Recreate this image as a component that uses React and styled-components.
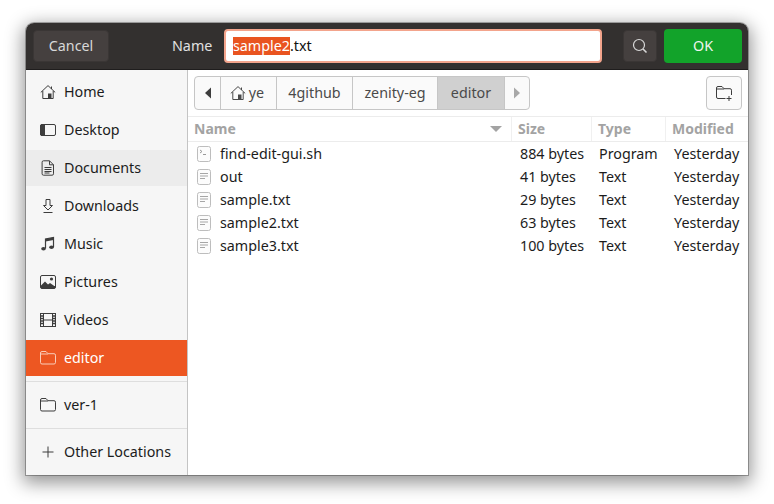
import React from "react";
import styled, { createGlobalStyle } from "styled-components";

const GlobalStyle = createGlobalStyle`
  html, body {
    margin: 0;
    padding: 0;
    background: #ffffff;
  }
  body {
    font-family: "Noto Sans", "Open Sans", sans-serif;
    font-size: 14.3px;
    line-height: 16px;
    color: #1c1c1c;
  }
`;

const Page = styled.div`
  width: 774px;
  height: 504px;
  box-sizing: border-box;
  padding: 23px 26px 29px;
  overflow: hidden;
`;

const Dialog = styled.div`
  height: 452px;
  display: flex;
  flex-direction: column;
  border-radius: 8px 8px 0 0;
  background: #ffffff;
  box-shadow: 0 0 0 1px rgba(0, 0, 0, 0.28), 0 5px 18px 3px rgba(0, 0, 0, 0.42);
`;

const HeaderBar = styled.header`
  height: 46px;
  flex: none;
  display: flex;
  align-items: center;
  padding: 0 6px 0 7px;
  background: #33302f;
  border-bottom: 1px solid #1f1d1d;
  border-radius: 8px 8px 0 0;
`;

const HeaderButton = styled.button`
  all: unset;
  box-sizing: border-box;
  display: flex;
  flex: none;
  align-items: center;
  justify-content: center;
  width: ${(p) => p.$width}px;
  height: 32px;
  margin-left: ${(p) => p.$left || 0}px;
  border-radius: 4px;
  background: #45403f;
  border: 1px solid #3a3635;
  color: #d8d8d8;
`;

const OkButton = styled.button`
  all: unset;
  box-sizing: border-box;
  display: flex;
  flex: none;
  align-items: center;
  justify-content: center;
  width: 78px;
  height: 34px;
  margin-left: 7px;
  border-radius: 4px;
  background: #12a32a;
  color: #f0f5f0;
`;

const NameLabel = styled.span`
  flex: none;
  width: 40px;
  margin-left: 63px;
  white-space: nowrap;
  color: #e0e0e0;
`;

const NameEntry = styled.div`
  flex: 1;
  box-sizing: border-box;
  height: 34px;
  margin-left: 12px;
  padding-left: 7px;
  display: flex;
  align-items: center;
  background: #ffffff;
  border: 2px solid #f3a48c;
  border-radius: 4px;
  color: #111111;
`;

const Selected = styled.span`
  padding: 1px 0;
  background: #e95420;
  color: #ffffff;
`;

const Body = styled.div`
  flex: 1;
  display: flex;
  min-height: 0;
`;

const Sidebar = styled.nav`
  box-sizing: border-box;
  width: 162px;
  flex: none;
  padding-top: 4px;
  display: flex;
  flex-direction: column;
  gap: 2px;
  background: #f6f6f6;
  border-right: 1px solid #c4c4c4;
`;

const SideRow = styled.div`
  height: 36px;
  flex: none;
  display: flex;
  align-items: center;
  gap: 8px;
  padding-left: 14px;
  color: ${(p) => (p.$active ? "#ffffff" : "#1c1c1c")};
  background: ${(p) => (p.$active ? "#ed5722" : p.$hover ? "#ececec" : "transparent")};
  svg {
    flex: none;
    color: ${(p) => (p.$active ? "#f9cdb9" : "#3d3d3d")};
  }
`;

const SideRule = styled.hr`
  flex: none;
  margin: 3px 0;
  border: 0;
  height: 1px;
  background: #dedede;
`;

const Main = styled.main`
  flex: 1;
  min-width: 0;
  display: flex;
  flex-direction: column;
`;

const PathRow = styled.div`
  height: 34px;
  flex: none;
  display: flex;
  justify-content: space-between;
  padding: 6px;
`;

const PathBar = styled.div`
  display: flex;
  height: 34px;
  box-sizing: border-box;
  border: 1px solid #c6c6c6;
  border-radius: 4px;
  background: #fafafa;
  overflow: hidden;
`;

const Crumb = styled.div`
  box-sizing: border-box;
  width: ${(p) => p.$width}px;
  display: flex;
  align-items: center;
  justify-content: center;
  gap: 3px;
  padding-right: ${(p) => p.$trim || 0}px;
  color: #4a4a4a;
  background: ${(p) => (p.$current ? "#d0d0d0" : "transparent")};
  border-left: ${(p) => (p.$first ? "0" : "1px solid #c6c6c6")};
`;

const NewFolderButton = styled.button`
  all: unset;
  box-sizing: border-box;
  width: 36px;
  height: 34px;
  display: flex;
  align-items: center;
  justify-content: center;
  border: 1px solid #c6c6c6;
  border-radius: 4px;
  background: #fafafa;
  color: #3d3d3d;
`;

const columns = "323px 80px 74px 1fr";

const TableHead = styled.div`
  box-sizing: border-box;
  height: 26px;
  flex: none;
  display: grid;
  grid-template-columns: ${columns};
  border-top: 1px solid #ececec;
  border-bottom: 1px solid #ececec;
`;

const HeadCell = styled.div`
  display: flex;
  align-items: center;
  justify-content: space-between;
  padding: 0 8px 0 ${(p) => p.$left}px;
  font-size: 14px;
  font-weight: 700;
  color: #a3a3a3;
  border-left: ${(p) => (p.$first ? "0" : "1px solid #f0f0f0")};
`;

const SortArrow = styled.span`
  width: 0;
  height: 0;
  margin-right: 1px;
  border-left: 6px solid transparent;
  border-right: 6px solid transparent;
  border-top: 6px solid #a3a3a3;
`;

const FileRow = styled.div`
  height: 23px;
  display: grid;
  grid-template-columns: ${columns};
  align-items: center;
`;

const NameCell = styled.div`
  display: flex;
  align-items: center;
  gap: 9px;
  padding-left: 9px;
`;

const Cell = styled.div`
  padding-left: ${(p) => p.$left}px;
  white-space: nowrap;
`;

const Icon = ({ children, size = 16 }) => (
  <svg
    width={size}
    height={size}
    viewBox="0 0 16 16"
    fill="none"
    stroke="currentColor"
    strokeWidth="1"
  >
    {children}
  </svg>
);

const HomeIcon = () => (
  <Icon>
    <path d="M0.8 8.4 8 1.6l7.2 6.8M2.8 7v7.5h10.4V7" />
    <path d="M11.5 2.5v2.5" />
    <rect x="8" y="9.5" width="3.5" height="5" fill="currentColor" stroke="none" />
  </Icon>
);

const DesktopIcon = () => (
  <Icon>
    <rect x="0.5" y="2.5" width="15" height="11" rx="1.5" />
    <path d="M2 2.5h2.5v11H2a1.5 1.5 0 0 1-1.5-1.5V4A1.5 1.5 0 0 1 2 2.5z" fill="currentColor" />
  </Icon>
);

const DocumentIcon = () => (
  <Icon>
    <path d="M3.5 0.8h6l4 4v9a1.4 1.4 0 0 1-1.4 1.4H3.5a1.4 1.4 0 0 1-1.4-1.4V2.2a1.4 1.4 0 0 1 1.4-1.4z" />
    <path d="M9.5 0.8v4h4" />
    <path d="M4.5 7.5h7M4.5 9.5h7M4.5 11.5h7M4.5 13h5" />
  </Icon>
);

const DownloadIcon = () => (
  <Icon>
    <path d="M6 1.5h4v6h2.5L8 12 3.5 7.5H6zM3.5 14.5h9" />
  </Icon>
);

const MusicIcon = () => (
  <Icon>
    <path d="M5.5 12.5V3l8-1.5v9.5" strokeWidth="1.2" />
    <path d="M5.5 3l8-1.5V4l-8 1.5z" fill="currentColor" stroke="none" />
    <ellipse cx="3.5" cy="12.8" rx="2.3" ry="1.8" fill="currentColor" stroke="none" />
    <ellipse cx="11.5" cy="11.3" rx="2.3" ry="1.8" fill="currentColor" stroke="none" />
  </Icon>
);

const PictureIcon = () => (
  <Icon>
    <rect x="0.5" y="1.5" width="15" height="13" rx="1.5" />
    <path d="M1 14v-2.5l4-4 3 3 2-1.5 5 3.5V14z" fill="currentColor" stroke="none" />
    <path d="M0.5 12h15v1a1.5 1.5 0 0 1-1.5 1.5H2A1.5 1.5 0 0 1 0.5 13z" fill="currentColor" stroke="none" />
    <circle cx="11.5" cy="5" r="1.6" fill="currentColor" stroke="none" />
  </Icon>
);

const VideoIcon = () => (
  <Icon>
    <rect x="0.5" y="1.5" width="15" height="13" />
    <path d="M3.5 1.5v13M12.5 1.5v13M3.5 8h9" />
    <path d="M0.5 4h3M0.5 6.5h3M0.5 9h3M0.5 11.5h3M12.5 4h3M12.5 6.5h3M12.5 9h3M12.5 11.5h3" strokeWidth="1.3" />
  </Icon>
);

const FolderIcon = () => (
  <Icon>
    <path d="M2 1.5h4l2 2.2h6A1.5 1.5 0 0 1 15.5 5.2v7.3a1.5 1.5 0 0 1-1.5 1.5H2a1.5 1.5 0 0 1-1.5-1.5V3A1.5 1.5 0 0 1 2 1.5z" />
    <path d="M0.5 4h7.5" />
  </Icon>
);

const PlusIcon = () => (
  <Icon>
    <path d="M8 2.5v11M2.5 8h11" />
  </Icon>
);

const SearchIcon = () => (
  <Icon>
    <circle cx="7" cy="7" r="5.5" strokeWidth="1.2" />
    <path d="M11 11l3.5 3.5" strokeWidth="1.6" />
  </Icon>
);

const NewFolderIcon = () => (
  <Icon>
    <path d="M9.5 13.5H2a1.5 1.5 0 0 1-1.5-1.5V3A1.5 1.5 0 0 1 2 1.5h4l2 2.2h6A1.5 1.5 0 0 1 15.5 5.2V10" />
    <path d="M0.5 4h7.5" />
    <path d="M13 11v5M10.5 13.5h5" />
  </Icon>
);

const TriangleIcon = ({ left, color }) => (
  <svg width="16" height="16" viewBox="0 0 16 16" fill={color}>
    <path d={left ? "M11 2.5v11L5 8z" : "M5 2.5v11L11 8z"} />
  </svg>
);

const FileIcon = ({ script }) => (
  <svg width="14" height="16" viewBox="0 0 14 16" fill="#fcfcfc" stroke="#bdbdbd">
    <rect x="0.5" y="0.5" width="13" height="15" rx="2" />
    {script ? (
      <path d="M3 4l2 1.5L3 7M6 8.5h3" fill="none" stroke="#9a9a9a" />
    ) : (
      <path d="M3 4.5h8M3 7h8M3 9.5h5" fill="none" stroke="#a6a6a6" />
    )}
  </svg>
);

const places = [
  { label: "Home", icon: <HomeIcon /> },
  { label: "Desktop", icon: <DesktopIcon /> },
  { label: "Documents", icon: <DocumentIcon />, hover: true },
  { label: "Downloads", icon: <DownloadIcon /> },
  { label: "Music", icon: <MusicIcon /> },
  { label: "Pictures", icon: <PictureIcon /> },
  { label: "Videos", icon: <VideoIcon /> },
  { label: "editor", icon: <FolderIcon />, active: true },
];

const files = [
  { name: "find-edit-gui.sh", size: "884 bytes", type: "Program", script: true },
  { name: "out", size: "41 bytes", type: "Text" },
  { name: "sample.txt", size: "29 bytes", type: "Text" },
  { name: "sample2.txt", size: "63 bytes", type: "Text" },
  { name: "sample3.txt", size: "100 bytes", type: "Text" },
];

function App() {
  return (
    <Page>
      <GlobalStyle />
      <Dialog>
        <HeaderBar>
          <HeaderButton $width={76}>Cancel</HeaderButton>
          <NameLabel>Name</NameLabel>
          <NameEntry>
            <Selected>sample2</Selected>.txt
          </NameEntry>
          <HeaderButton $width={34} $left={21}>
            <SearchIcon />
          </HeaderButton>
          <OkButton>OK</OkButton>
        </HeaderBar>
        <Body>
          <Sidebar>
            {places.map((place) => (
              <SideRow key={place.label} $active={place.active} $hover={place.hover}>
                {place.icon}
                {place.label}
              </SideRow>
            ))}
            <SideRule />
            <SideRow>
              <FolderIcon />
              ver-1
            </SideRow>
            <SideRule />
            <SideRow>
              <PlusIcon />
              Other Locations
            </SideRow>
          </Sidebar>
          <Main>
            <PathRow>
              <PathBar>
                <Crumb $width={25} $first>
                  <TriangleIcon left color="#3d3d3d" />
                </Crumb>
                <Crumb $width={56} $trim={3}>
                  <HomeIcon />
                  ye
                </Crumb>
                <Crumb $width={76}>4github</Crumb>
                <Crumb $width={85}>zenity-eg</Crumb>
                <Crumb $width={67} $current>
                  editor
                </Crumb>
                <Crumb $width={25}>
                  <TriangleIcon color="#a8a8a8" />
                </Crumb>
              </PathBar>
              <NewFolderButton>
                <NewFolderIcon />
              </NewFolderButton>
            </PathRow>
            <TableHead>
              <HeadCell $first $left={6}>
                Name
                <SortArrow />
              </HeadCell>
              <HeadCell $left={6}>Size</HeadCell>
              <HeadCell $left={6}>Type</HeadCell>
              <HeadCell $left={6}>Modified</HeadCell>
            </TableHead>
            {files.map((file) => (
              <FileRow key={file.name}>
                <NameCell>
                  <FileIcon script={file.script} />
                  {file.name}
                </NameCell>
                <Cell $left={9}>{file.size}</Cell>
                <Cell $left={8}>{file.type}</Cell>
                <Cell $left={9}>Yesterday</Cell>
              </FileRow>
            ))}
          </Main>
        </Body>
      </Dialog>
    </Page>
  );
}

export default App;
